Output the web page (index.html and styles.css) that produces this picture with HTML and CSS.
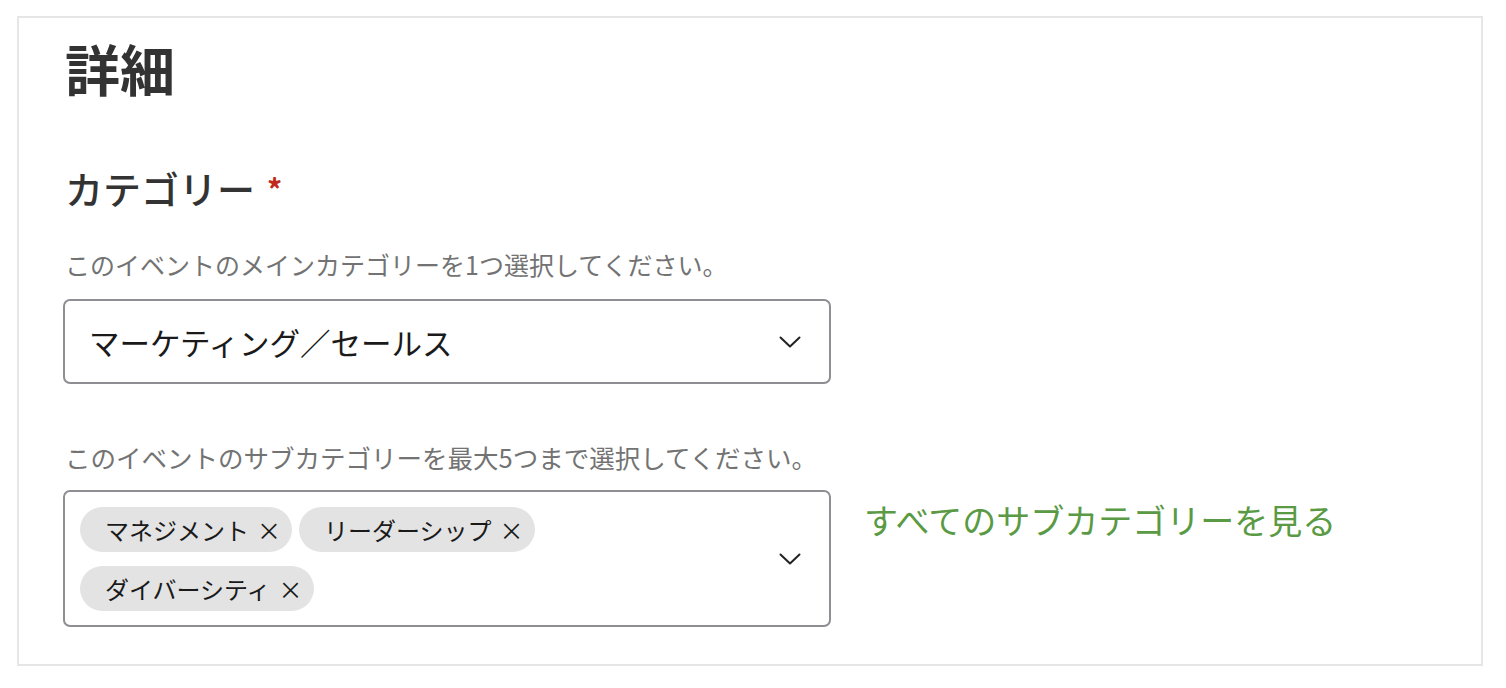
FILE: index.html
```html
<!DOCTYPE html>
<html lang="ja">
<head>
<meta charset="utf-8">
<link rel="stylesheet" href="styles.css">
</head>
<body>
<section class="card">
  <h1 class="title">詳細</h1>
  <h2 class="label">カテゴリー<span class="req">*</span></h2>
  <p class="hint hint-main">このイベントのメインカテゴリーを1つ選択してください。</p>
  <div class="select">
    <span class="select-text">マーケティング／セールス</span>
    <svg class="chev" width="22" height="12" viewBox="0 0 22 12"><path d="M1.5 1.5 L11 10.5 L20.5 1.5" fill="none" stroke="#222" stroke-width="2" stroke-linecap="round" stroke-linejoin="round"/></svg>
  </div>
  <p class="hint hint-sub">このイベントのサブカテゴリーを最大5つまで選択してください。</p>
  <div class="multi-row">
    <div class="multi">
      <div class="chips">
        <span class="chip">マネジメント<span class="x">×</span></span>
        <span class="chip">リーダーシップ<span class="x">×</span></span>
        <span class="chip">ダイバーシティ<span class="x">×</span></span>
      </div>
      <svg class="chev" width="22" height="12" viewBox="0 0 22 12"><path d="M1.5 1.5 L11 10.5 L20.5 1.5" fill="none" stroke="#222" stroke-width="2" stroke-linecap="round" stroke-linejoin="round"/></svg>
    </div>
    <a class="link" href="#">すべてのサブカテゴリーを見る</a>
  </div>
</section>
</body>
</html>
```

FILE: styles.css
```css
html, body {
  margin: 0;
  padding: 0;
  background: #fff;
}
body {
  font-family: "Noto Sans CJK JP", "Noto Sans", sans-serif;
  color: #333;
}
.card {
  box-sizing: border-box;
  margin: 16px 23px 0 17px;
  height: 650px;
  border: 2px solid #e6e6e6;
  padding: 0 0 0 46px;
}
.title {
  margin: 14px 0 0 0;
  font-size: 55px;
  line-height: 70px;
  font-weight: 700;
  color: #333;
}
.label {
  margin: 62px 0 0 0;
  font-size: 38px;
  line-height: 48px;
  font-weight: 500;
  color: #333;
  display: flex;
  align-items: center;
}
.req {
  color: #c0281c;
  font-size: 30px;
  margin-left: 12px;
  font-weight: 700;
}
.hint {
  margin: 0;
  font-size: 25px;
  line-height: 36px;
  color: #737373;
}
.hint-main {
  margin-top: 34px;
}
.hint-sub {
  margin-top: 55px;
  font-size: 25.5px;
}
.select {
  box-sizing: border-box;
  margin-top: 17px;
  margin-left: -2px;
  width: 768px;
  height: 85px;
  border: 2px solid #8e8e93;
  border-radius: 7px;
  display: flex;
  align-items: center;
  justify-content: space-between;
  padding: 0 28px 0 24px;
}
.select-text {
  font-size: 30.5px;
  color: #1a1a1a;
}
.chev {
  flex: none;
}
.multi-row {
  margin-top: 15px;
  margin-left: -2px;
  display: flex;
  align-items: flex-start;
  gap: 33px;
}
.multi {
  box-sizing: border-box;
  width: 768px;
  height: 137px;
  border: 2px solid #8e8e93;
  border-radius: 7px;
  display: flex;
  align-items: center;
  justify-content: space-between;
  padding: 0 28px 0 15px;
}
.chips {
  display: flex;
  flex-wrap: wrap;
  gap: 14px 7px;
  width: 480px;
}
.chip {
  box-sizing: border-box;
  height: 45px;
  display: inline-flex;
  align-items: center;
  background: #e3e3e3;
  border-radius: 23px;
  padding: 0 11px 0 25px;
  font-size: 24px;
  color: #1a1a1a;
}
.x {
  margin-left: 8px;
  font-size: 24px;
}
.link {
  margin-top: 8px;
  font-size: 34px;
  line-height: 44px;
  color: #5a9a44;
  text-decoration: none;
}
```
